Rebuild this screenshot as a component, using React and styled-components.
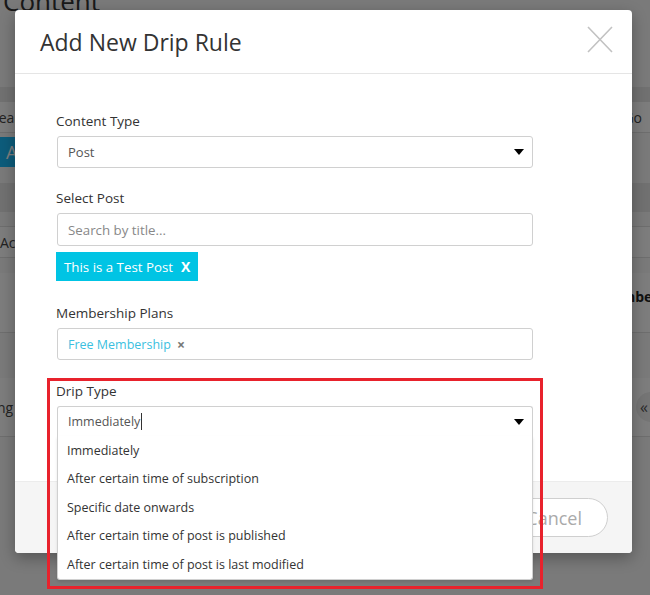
import styled, { createGlobalStyle } from 'styled-components';

const GlobalStyle = createGlobalStyle`
  html, body {
    margin: 0;
    padding: 0;
  }
  body {
    font-family: 'Open Sans', 'Liberation Sans', sans-serif;
    background: #f4f4f4;
  }
`;

const Page = styled.div`
  position: relative;
  width: 650px;
  height: 595px;
  overflow: hidden;
  background: #f4f4f4;
`;

// page behind the modal
const PageTitle = styled.h1`
  margin: -12px 0 0;
  height: 99px;
  padding-left: 3px;
  font-size: 26px;
  font-weight: 400;
  line-height: 1;
  color: #333;
`;

const Band = styled.div`
  height: ${(p) => p.$h}px;
  display: flex;
  align-items: ${(p) => (p.$top ? 'flex-start' : 'center')};
  padding-top: ${(p) => p.$top || 0}px;
  justify-content: space-between;
  background: ${(p) => (p.$tone === 'dark' ? '#e2e2e2' : p.$tone === 'row' ? '#fbfbfb' : '#f4f4f4')};
  border-bottom: ${(p) => (p.$line ? '1px solid #dcdcdc' : 'none')};
  font-size: 14px;
  color: #444;
  white-space: nowrap;
  box-sizing: border-box;
`;

const BgText = styled.span`
  margin-left: ${(p) => p.$ml || 0}px;
  margin-right: ${(p) => p.$mr || 0}px;
  margin-top: ${(p) => p.$mt || 0}px;
  font-weight: ${(p) => (p.$bold ? 700 : 400)};
  color: ${(p) => (p.$bold ? '#222' : '#444')};
`;

const BgButton = styled.span`
  display: inline-flex;
  align-items: center;
  height: 30px;
  padding: 0 10px 0 6px;
  background: #1ab8f6;
  color: #fff;
  font-size: 18px;
`;

const PagerDot = styled.span`
  width: 30px;
  height: 30px;
  margin-right: -16px;
  border-radius: 50%;
  background: #eaeaea;
  display: inline-flex;
  align-items: center;
  padding-left: 4px;
  box-sizing: border-box;
  font-size: 16px;
  color: #555;
`;

const Overlay = styled.div`
  position: absolute;
  inset: 0;
  background: rgba(0, 0, 0, 0.5);
`;

// modal
const Modal = styled.div`
  position: absolute;
  top: 10px;
  left: 15px;
  width: 617px;
  height: 543px;
  background: #fff;
  border-radius: 4px;
  box-shadow: 0 5px 15px rgba(0, 0, 0, 0.3);
  display: flex;
  flex-direction: column;
`;

const Header = styled.div`
  height: 63px;
  flex-shrink: 0;
  display: flex;
  align-items: center;
  justify-content: space-between;
  padding: 0 19px 0 25px;
  border-bottom: 1px solid #e5e5e5;
`;

const Title = styled.h2`
  margin: 0;
  font-size: 23px;
  font-weight: 400;
  color: #333;
`;

const CloseButton = styled.button`
  border: 0;
  background: none;
  padding: 0;
  width: 26px;
  height: 27px;
  margin-top: -4px;
  cursor: pointer;
  display: flex;
`;

const Body = styled.div`
  flex: 1;
  padding: 37px 99px 0 42px;
  display: flex;
  flex-direction: column;
`;

const Field = styled.div`
  position: relative;
  margin-top: ${(p) => p.$mt || 0}px;
  z-index: ${(p) => (p.$open ? 5 : 'auto')};

  ${(p) =>
    p.$highlight &&
    `
    &::after {
      content: '';
      position: absolute;
      top: -3px;
      left: -10px;
      right: -10px;
      height: 211px;
      border: 3px solid #e8222c;
      box-sizing: border-box;
      pointer-events: none;
      z-index: 6;
    }
  `}
`;

const Label = styled.label`
  display: block;
  font-size: 13.5px;
  line-height: 20px;
  color: #333;
  margin: 0 0 5px -1px;
`;

const Box = styled.div`
  height: ${(p) => p.$h || 32}px;
  box-sizing: border-box;
  border: 1px solid #d0d0d0;
  border-radius: ${(p) => (p.$open ? '3px 3px 0 0' : '3px')};
  ${(p) => p.$open && 'border-bottom: none;'}
  padding: 0 8px 0 10px;
  display: flex;
  align-items: center;
  justify-content: space-between;
  font-size: ${(p) => (p.$small ? 12.5 : 13)}px;
  color: #555;
  background: #fff;
`;

const Placeholder = styled.span`
  color: #888;
  font-size: 13.3px;
`;

const Caret = styled.span`
  width: 0;
  height: 0;
  border-left: 5px solid transparent;
  border-right: 5px solid transparent;
  border-top: 6px solid #000;
`;

const Typed = styled.span`
  display: inline-flex;
  align-items: center;
  &::after {
    content: '';
    width: 1px;
    height: 17px;
    margin-left: 1px;
    background: #333;
  }
`;

const Tag = styled.span`
  display: flex;
  width: fit-content;
  align-items: center;
  gap: 8px;
  height: 29px;
  margin: 6px 0 0 -1px;
  padding: 0 8px;
  background: #00c4e4;
  color: #fff;
  font-size: 13.3px;
`;

const TagRemove = styled.b`
  font-weight: 700;
  font-size: 14px;
`;

const Chip = styled.span`
  color: #3bbfe0;
`;

const ChipRemove = styled.b`
  color: #777;
  font-weight: 700;
  margin-left: 6px;
  font-size: 14px;
`;

const ChipRow = styled.span`
  display: inline-flex;
  align-items: center;
`;

const List = styled.ul`
  position: absolute;
  top: 100%;
  left: 0;
  right: 0;
  margin: 0;
  padding: 0;
  list-style: none;
  background: #fff;
  border: 1px solid #d0d0d0;
  border-top: none;
  border-radius: 0 0 3px 3px;
  box-shadow: 0 2px 3px rgba(0, 0, 0, 0.1);
`;

const Option = styled.li`
  height: 28.5px;
  display: flex;
  align-items: center;
  padding-left: 9px;
  font-size: 12.5px;
  color: #333;
`;

const Footer = styled.div`
  height: 72px;
  flex-shrink: 0;
  box-sizing: border-box;
  display: flex;
  align-items: center;
  justify-content: flex-end;
  padding-right: 24px;
  background: #f5f5f5;
  border-top: 1px solid #ececec;
  border-radius: 0 0 4px 4px;
`;

const CancelButton = styled.button`
  height: 39px;
  padding: 0 25px;
  border: 1px solid #cfcfcf;
  border-radius: 20px;
  background: #fff;
  color: #aaa;
  font-family: inherit;
  font-size: 18px;
  cursor: pointer;
`;

const dripOptions = [
  'Immediately',
  'After certain time of subscription',
  'Specific date onwards',
  'After certain time of post is published',
  'After certain time of post is last modified',
];

const CloseIcon = () => (
  <svg width='26' height='27' viewBox='0 0 26 27'>
    <path d='M1 1 L25 26 M25 1 L1 26' stroke='#c2c2c2' strokeWidth='1.6' fill='none' />
  </svg>
);

export default function App() {
  return (
    <Page>
      <GlobalStyle />
      <PageTitle>Content</PageTitle>
      <Band $h={15} $tone='dark' />
      <Band $h={31} $tone='row' $line>
        <BgText $ml={-9}>Search</BgText>
        <BgText $mr={8}>Go</BgText>
      </Band>
      <Band $h={50} $top={4}>
        <BgButton>Add New</BgButton>
      </Band>
      <Band $h={29} $tone='dark' />
      <Band $h={15} $line />
      <Band $h={31} $tone='row' $line>
        <BgText>Actions</BgText>
      </Band>
      <Band $h={15} />
      <Band $h={60} $tone='row' $line>
        <BgText $bold $ml={600} $mt={-12}>Members</BgText>
      </Band>
      <Band $h={45} />
      <Band $h={59} $tone='row' $line>
        <BgText $ml={-40}>Pending</BgText>
        <PagerDot>«</PagerDot>
      </Band>
      <Overlay />

      <Modal>
        <Header>
          <Title>Add New Drip Rule</Title>
          <CloseButton aria-label='Close'>
            <CloseIcon />
          </CloseButton>
        </Header>
        <Body>
          <Field>
            <Label>Content Type</Label>
            <Box>
              Post
              <Caret />
            </Box>
          </Field>
          <Field $mt={20}>
            <Label>Select Post</Label>
            <Box $h={33}>
              <Placeholder>Search by title...</Placeholder>
            </Box>
            <Tag>
              This is a Test Post
              <TagRemove>X</TagRemove>
            </Tag>
          </Field>
          <Field $mt={22}>
            <Label>Membership Plans</Label>
            <Box $small>
              <ChipRow>
                <Chip>Free Membership</Chip>
                <ChipRemove>×</ChipRemove>
              </ChipRow>
            </Box>
          </Field>
          <Field $mt={21} $open $highlight>
            <Label>Drip Type</Label>
            <Box $h={30} $open $small>
              <Typed>Immediately</Typed>
              <Caret />
            </Box>
            <List>
              {dripOptions.map((o) => (
                <Option key={o}>{o}</Option>
              ))}
            </List>
          </Field>
        </Body>
        <Footer>
          <CancelButton>Cancel</CancelButton>
        </Footer>
      </Modal>
    </Page>
  );
}
